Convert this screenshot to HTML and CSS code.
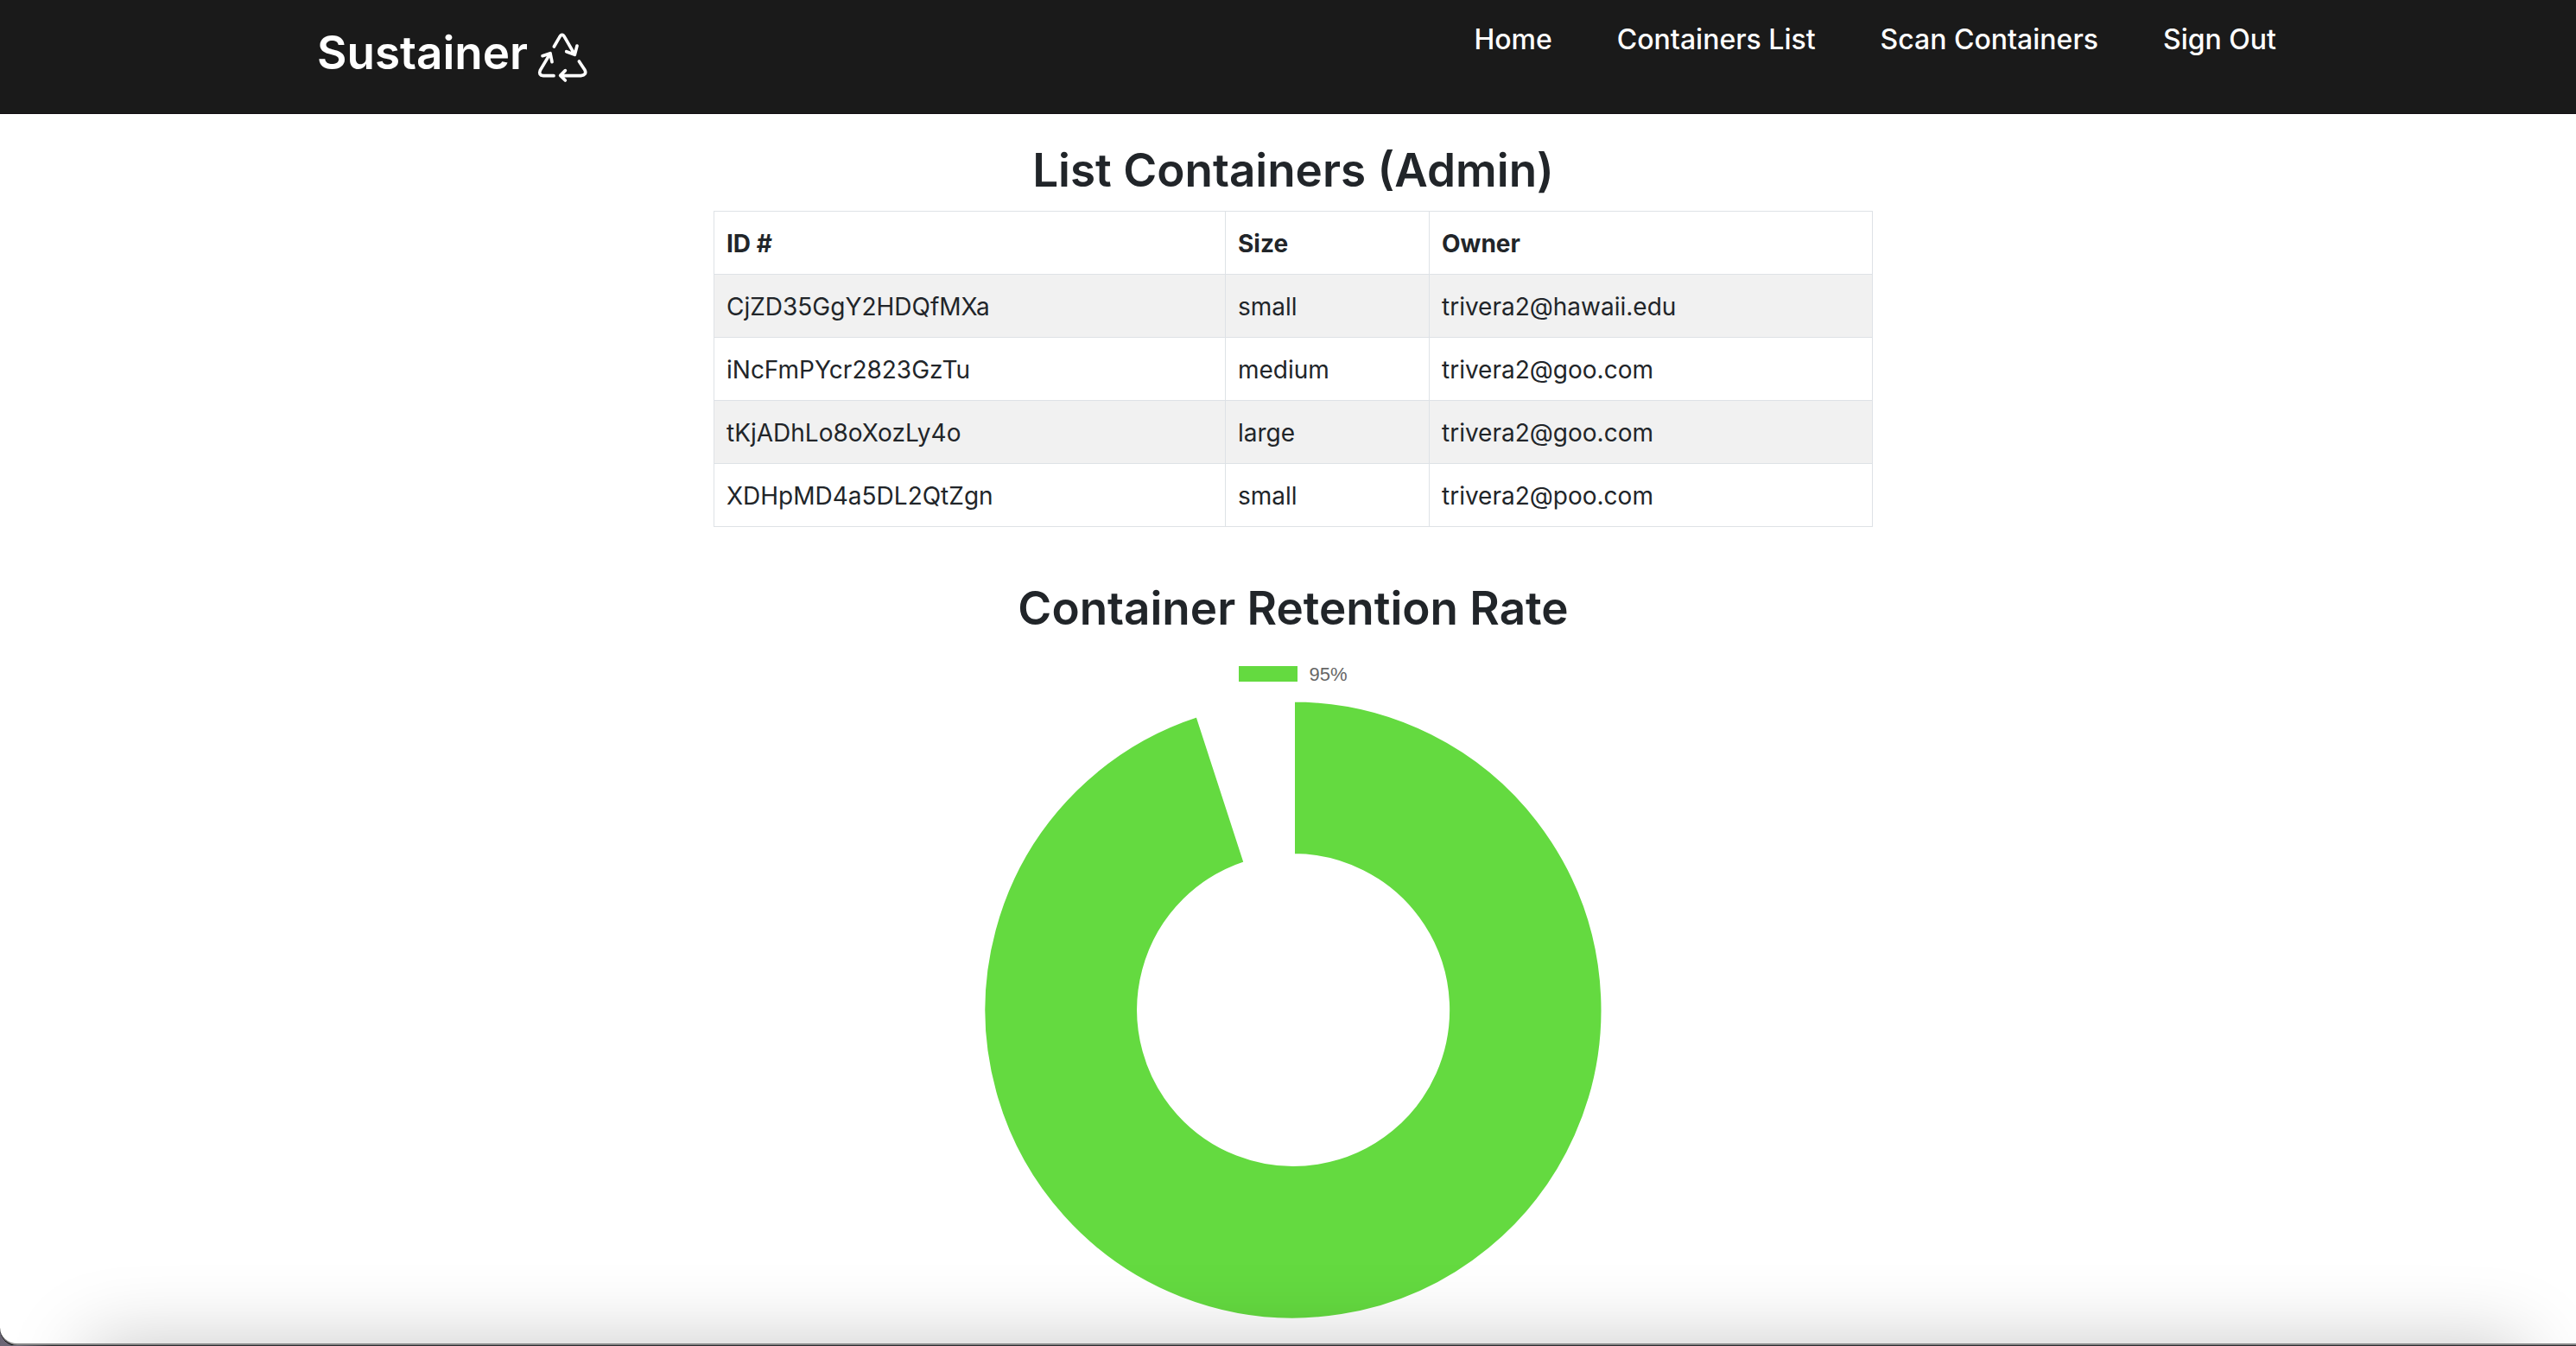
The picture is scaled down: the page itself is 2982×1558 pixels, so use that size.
FILE: index.html
```html
<!DOCTYPE html>
<html lang="en">
<head>
  <meta charset="utf-8">
  <meta name="viewport" content="width=device-width, initial-scale=1">
  <title>Sustainer</title>
  <link rel="stylesheet" href="styles.css">
</head>
<body>
  <div class="window">
    <header class="navbar">
      <div class="navbar-inner">
        <a class="brand" href="#">
          <span>Sustainer</span>
          <svg class="brand-icon" viewBox="60 50 180 180" aria-hidden="true">
            <path d="M121 101 L139 70 Q149 50 159 70 L192 127 M164 118 L193 129 L201 98"/>
            <path d="M120 202 H84 Q66 200 73 183 L107 126 M81 133 L108 124 L114 154"/>
            <path d="M145 202 H214 Q236 199 228 182 L208 152 M160 184 L143 201 L160 218"/>
          </svg>
        </a>
        <nav class="nav-links">
          <a href="#">Home</a>
          <a href="#">Containers List</a>
          <a href="#">Scan Containers</a>
          <a href="#">Sign Out</a>
        </nav>
      </div>
    </header>
    <main class="content">
      <section class="listing">
        <h2>List Containers (Admin)</h2>
        <table class="table">
          <colgroup><col class="col-id"><col class="col-size"><col></colgroup>
          <thead>
            <tr><th scope="col">ID #</th><th scope="col">Size</th><th scope="col">Owner</th></tr>
          </thead>
          <tbody>
            <tr><td>CjZD35GgY2HDQfMXa</td><td>small</td><td>trivera2@hawaii.edu</td></tr>
            <tr><td>iNcFmPYcr2823GzTu</td><td>medium</td><td>trivera2@goo.com</td></tr>
            <tr><td>tKjADhLo8oXozLy4o</td><td>large</td><td>trivera2@goo.com</td></tr>
            <tr><td>XDHpMD4a5DL2QtZgn</td><td>small</td><td>trivera2@poo.com</td></tr>
          </tbody>
        </table>
      </section>
      <section class="retention">
        <h2>Container Retention Rate</h2>
        <div class="legend"><span class="swatch"></span>95%</div>
        <svg class="donut" viewBox="-357 -357 714 714" role="img" aria-label="Container retention rate: 95%">
          <path d="M0 -358.5 A358.5 358.5 0 1 1 -110.8 -340.95 L-55.3 -170.2 A179 179 0 1 0 0 -179 Z"/>
        </svg>
      </section>
    </main>
    <div class="dock-shadow"></div>
  </div>
</body>
</html>
```
FILE: styles.css
```css
* {
  box-sizing: border-box;
}

html {
  background: linear-gradient(90deg, #6b6675 20px, #2b2b2f 60px);
}

body {
  margin: 0;
  color: #212529;
  font-family: Inter, "Liberation Sans", sans-serif;
  font-size: 28px;
  line-height: 43px;
}

.window {
  position: relative;
  min-height: calc(100vh - 2px);
  overflow: hidden;
  background: #fff;
  border-bottom: 2px solid #888;
  border-bottom-left-radius: 20px;
  box-shadow: 0 1px 0 #000;
}

.navbar {
  height: 132px;
  padding-left: 20px;
  background: #1a1a1a;
  border-bottom: 1px solid #120d12;
}

.navbar-inner {
  display: flex;
  justify-content: space-between;
  max-width: 2268px;
  margin: 0 auto;
  padding-top: 24px;
}

.navbar a {
  color: #fff;
  text-decoration: none;
}

.brand {
  display: flex;
  align-items: center;
  gap: 10px;
  height: 74px;
  font-size: 53px;
  font-weight: 600;
}

.brand-icon {
  width: 60px;
  height: 60px;
  margin-top: 12px;
  fill: none;
  stroke: #fff;
  stroke-width: 11;
  stroke-linecap: round;
  stroke-linejoin: round;
}

.nav-links {
  display: flex;
  gap: 75px;
  font-size: 32px;
  font-weight: 500;
}

.content {
  padding: 29px 0 29px 12px;
}

h2 {
  margin: 0 0 12px;
  padding-top: 2px;
  font-size: 53px;
  font-weight: 600;
  line-height: 69px;
  text-align: center;
}

.listing {
  max-width: 1342px;
  margin: 0 auto;
}

.table {
  width: 100%;
  table-layout: fixed;
  border-collapse: collapse;
}

.col-id {
  width: 592px;
}

.col-size {
  width: 236px;
}

.table th,
.table td {
  padding: 16px 14px 13px;
  border: 1px solid #dee2e6;
  text-align: left;
}

.table th {
  font-weight: 700;
}

.table tbody tr:nth-child(odd) {
  background: #f1f1f1;
}

.retention {
  display: flex;
  flex-direction: column;
  align-items: center;
  margin-top: 58px;
}

.legend {
  display: flex;
  align-items: center;
  gap: 13px;
  height: 30px;
  margin: 14px 0 17px;
  color: #666;
  font-family: "Liberation Sans", Arial, sans-serif;
  font-size: 22px;
}

.swatch {
  width: 68px;
  height: 18px;
  background: #64da40;
}

.donut {
  display: block;
  width: 714px;
  max-width: 100%;
  fill: #64da40;
  stroke: #fff;
  stroke-width: 4;
}

.dock-shadow {
  position: absolute;
  top: 100%;
  left: 100px;
  right: 60px;
  height: 120px;
  box-shadow: 0 0 90px rgba(0, 0, 0, 0.22);
  pointer-events: none;
}
```
